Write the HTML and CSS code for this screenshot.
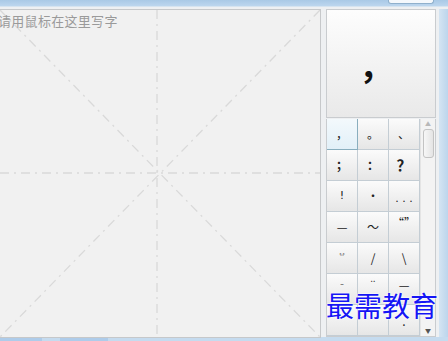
FILE: index.html
```html
<!DOCTYPE html>
<html lang="zh-CN">
<head>
    <meta charset="UTF-8">
    <title>手写输入</title>
    <link rel="stylesheet" href="styles.css">
</head>
<body>
    <div class="titlebar">
        <div class="title-btn"></div>
    </div>

    <div class="window">
        <!-- handwriting pad -->
        <div class="pad">
            <svg class="guides" width="320" height="327" viewBox="0 0 320 327">
                <line x1="0" y1="0" x2="320" y2="327"/>
                <line x1="320" y1="0" x2="0" y2="327"/>
                <line x1="157" y1="0" x2="157" y2="327"/>
                <line x1="0" y1="163" x2="320" y2="163"/>
            </svg>
            <div class="hint">请用鼠标在这里写字</div>
        </div>

        <!-- candidate panel -->
        <div class="side">
            <div class="preview"><span>，</span></div>
            <div class="list">
                <div class="grid">
                    <div class="cell selected">，</div>
                    <div class="cell">。</div>
                    <div class="cell">、</div>
                    <div class="cell bold">；</div>
                    <div class="cell bold">：</div>
                    <div class="cell big">？</div>
                    <div class="cell latin">!</div>
                    <div class="cell">·</div>
                    <div class="cell low latin">. . .</div>
                    <div class="cell">—</div>
                    <div class="cell">～</div>
                    <div class="cell top">“”</div>
                    <div class="cell tiny">〝〞</div>
                    <div class="cell">/</div>
                    <div class="cell">\</div>
                    <div class="cell top">‐</div>
                    <div class="cell top">¨</div>
                    <div class="cell top">—</div>
                    <div class="cell"></div>
                    <div class="cell"></div>
                    <div class="cell low">.</div>
                </div>
                <div class="scrollbar">
                    <div class="arrow">▲</div>
                    <div class="thumb"></div>
                    <div class="track"></div>
                    <div class="arrow down">▼</div>
                </div>
            </div>
            <div class="watermark">最需教育</div>
        </div>
        <div class="frame-right"></div>
    </div>

    <div class="statusbar">
        <div class="tab"></div>
        <div class="tab wide"></div>
    </div>
</body>
</html>
```

FILE: styles.css
```css
body {
    margin: 0;
    width: 448px;
    height: 341px;
    overflow: hidden;
    background-color: #f0f0f0;
    font-family: "Noto Sans CJK SC", "Noto Sans", sans-serif;
}

.titlebar {
    height: 6px;
    background: linear-gradient(#a9c9e6, #bcd6ee);
    position: relative;
}

.title-btn {
    position: absolute;
    right: 14px;
    top: 0;
    width: 44px;
    height: 3px;
    background-color: #f4f8fc;
    border: 1px solid #8fb0cc;
    border-top: none;
    border-radius: 0 0 3px 3px;
}

.window {
    display: flex;
    height: 331px;
    padding-top: 2px;
    box-sizing: border-box;
    background-color: #eef0f2;
    border-top: 1px solid #d6e4f0;
}

.pad {
    position: relative;
    width: 320px;
    height: 327px;
    background-color: #f1f1f1;
    border: 1px solid #c6c8ca;
    border-left: none;
}

.guides {
    display: block;
}

.guides line {
    stroke: #d9d9d9;
    stroke-width: 1.3;
    stroke-dasharray: 9 5 2 5;
}

.hint {
    position: absolute;
    left: -2px;
    top: 1px;
    font-size: 13px;
    color: #9a9a9a;
    letter-spacing: 0.3px;
}

.side {
    position: relative;
    margin-left: 5px;
    width: 110px;
    display: flex;
    flex-direction: column;
}

.preview {
    height: 107px;
    border: 1px solid #c9cccf;
    background: linear-gradient(#fdfdfd, #e9e9e9);
    display: flex;
    justify-content: center;
    align-items: center;
}

.preview span {
    font-size: 34px;
    font-weight: bold;
    color: #111;
    line-height: 1;
    margin-top: 4px;
    margin-right: 10px;
}

.list {
    display: flex;
    margin-top: 1px;
    height: 218px;
    border: 1px solid #c9cccf;
    border-top: none;
    overflow: hidden;
}

.grid {
    display: grid;
    grid-template-columns: repeat(3, 31px);
    grid-auto-rows: 31px;
}

.cell {
    box-sizing: border-box;
    border: 1px solid #c4cdd4;
    margin: -1px 0 0 -1px;
    width: 32px;
    height: 32px;
    background: linear-gradient(#fbfbfb, #e6e6e6);
    display: flex;
    justify-content: center;
    align-items: center;
    font-size: 12px;
    color: #222;
}

.cell.selected {
    background: linear-gradient(#f3f9fc, #e2f0f8);
    border-color: #89aebe;
    position: relative;
}

.cell.latin {
    font-family: "DejaVu Sans", sans-serif;
    font-size: 11px;
    white-space: pre;
}

.cell.bold {
    font-weight: bold;
}

.cell.big {
    font-size: 15px;
    font-weight: bold;
}

.cell.low {
    align-items: flex-end;
    padding-bottom: 6px;
}

.cell.top {
    align-items: flex-start;
    padding-top: 2px;
}

.cell.tiny {
    font-size: 7px;
    align-items: flex-start;
    padding-top: 8px;
}

.scrollbar {
    width: 15px;
    display: flex;
    flex-direction: column;
    align-items: center;
    background-color: #f3f3f3;
    border-left: 1px solid #e4e4e4;
}

.arrow {
    font-size: 6px;
    color: #b8b8b8;
    height: 10px;
    line-height: 10px;
}

.arrow.down {
    color: #555;
}

.thumb {
    width: 11px;
    height: 29px;
    border: 1px solid #c3c3c3;
    border-radius: 3px;
    background: linear-gradient(90deg, #f7f7f7, #e4e4e4);
    box-sizing: border-box;
}

.track {
    flex: 1;
}

.watermark {
    position: absolute;
    left: 0;
    top: 278px;
    font-size: 28px;
    line-height: 36px;
    letter-spacing: 0;
    white-space: nowrap;
    color: #1515f5;
    text-shadow: 0 0 2px #fff, 0 0 2px #fff;
}

.frame-right {
    flex: 1;
    margin-left: 3px;
    background: linear-gradient(90deg, #d4e4f2, #bcd5ec);
}

.statusbar {
    height: 4px;
    background-color: #c5dbef;
    display: flex;
}

.tab {
    width: 42px;
    height: 4px;
    background-color: #aeccea;
}

.tab.wide {
    margin-left: 18px;
    width: 48px;
}
```
